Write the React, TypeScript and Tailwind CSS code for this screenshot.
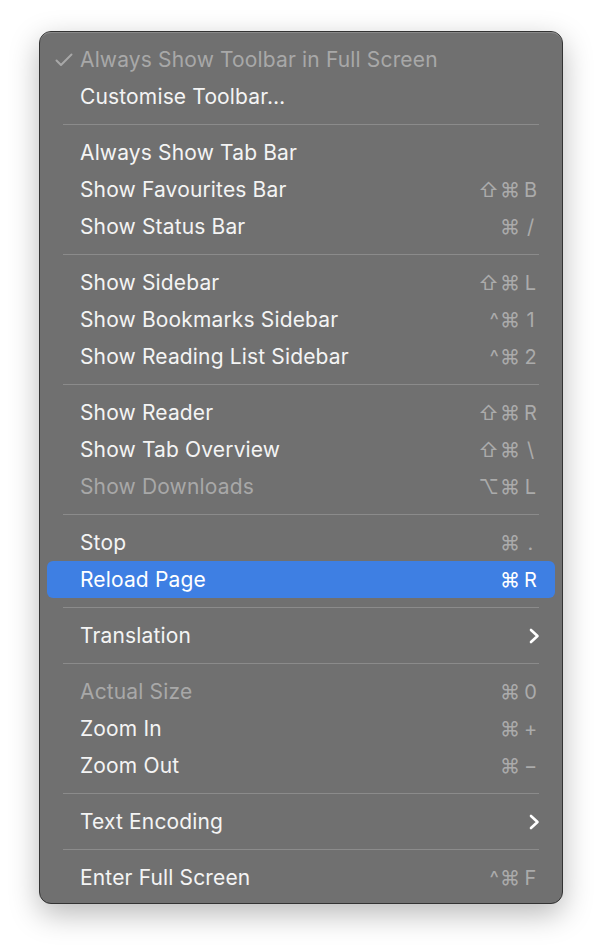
type Item = {
  label: string;
  keys?: [string, string];
  disabled?: boolean;
  checked?: boolean;
  active?: boolean;
  submenu?: boolean;
};

const groups: Item[][] = [
  [
    { label: 'Always Show Toolbar in Full Screen', disabled: true, checked: true },
    { label: 'Customise Toolbar…' },
  ],
  [
    { label: 'Always Show Tab Bar' },
    { label: 'Show Favourites Bar', keys: ['⇧⌘', 'B'] },
    { label: 'Show Status Bar', keys: ['⌘', '/'] },
  ],
  [
    { label: 'Show Sidebar', keys: ['⇧⌘', 'L'] },
    { label: 'Show Bookmarks Sidebar', keys: ['^⌘', '1'] },
    { label: 'Show Reading List Sidebar', keys: ['^⌘', '2'] },
  ],
  [
    { label: 'Show Reader', keys: ['⇧⌘', 'R'] },
    { label: 'Show Tab Overview', keys: ['⇧⌘', '\\'] },
    { label: 'Show Downloads', keys: ['⌥⌘', 'L'], disabled: true },
  ],
  [
    { label: 'Stop', keys: ['⌘', '.'] },
    { label: 'Reload Page', keys: ['⌘', 'R'], active: true },
  ],
  [{ label: 'Translation', submenu: true }],
  [
    { label: 'Actual Size', keys: ['⌘', '0'], disabled: true },
    { label: 'Zoom In', keys: ['⌘', '+'] },
    { label: 'Zoom Out', keys: ['⌘', '−'] },
  ],
  [{ label: 'Text Encoding', submenu: true }],
  [{ label: 'Enter Full Screen', keys: ['^⌘', 'F'] }],
];

function Row({ item }: { item: Item }) {
  const text = item.active ? 'text-white' : item.disabled ? 'text-[#a8a8a8]' : 'text-[#f4f4f4]';
  const keyText = item.active ? 'text-white' : 'text-[#ababab]';
  return (
    <div
      className={`relative flex items-center h-[37px] pl-[33px] pr-[16px] rounded-[6px] ${
        item.active ? 'bg-[#3e7fe3]' : ''
      }`}
    >
      {item.checked && (
        <svg className="absolute left-[8px] top-[12px]" width="18" height="14" viewBox="0 0 18 14">
          <path d="M1.5 7.5 L6 12 L16.5 1.5" fill="none" stroke="#a8a8a8" strokeWidth="2" strokeLinecap="round" strokeLinejoin="round" />
        </svg>
      )}
      <span className={`flex-1 text-[21px] tracking-[0.15px] ${text}`}>{item.label}</span>
      {item.keys && (
        <span className={`flex items-center text-[20px] ${keyText}`}>
          <span className="tracking-[1px]">{item.keys[0]}</span>
          <span className="w-[17px] text-center ml-[1px]">{item.keys[1]}</span>
        </span>
      )}
      {item.submenu && (
        <svg width="12" height="16" viewBox="0 0 12 16" className="mr-[-1px]">
          <path d="M3 2 L9.5 8 L3 14" fill="none" stroke="#ffffff" strokeWidth="2.6" strokeLinecap="round" strokeLinejoin="round" />
        </svg>
      )}
    </div>
  );
}

export default function App() {
  return (
    <div className="min-h-[949px] bg-white pt-[31px] pl-[39px]" style={{ fontFamily: 'Inter, "DejaVu Sans", sans-serif' }}>
      <div className="w-[524px] rounded-[12px] border border-[#333333] bg-[#707070] shadow-[0_10px_30px_rgba(0,0,0,0.28)]">
        <div className="rounded-[11px] border-t border-[#8a8a8a] px-[7px] pt-[8px] pb-[7px]">
          {groups.map((group, gi) => (
            <div key={gi}>
              {gi > 0 && (
                <div className="h-[19px] flex items-center px-[16px]">
                  <div className="h-px w-full bg-[#8b8b8b]" />
                </div>
              )}
              {group.map((item) => (
                <Row key={item.label} item={item} />
              ))}
            </div>
          ))}
        </div>
      </div>
    </div>
  );
}
